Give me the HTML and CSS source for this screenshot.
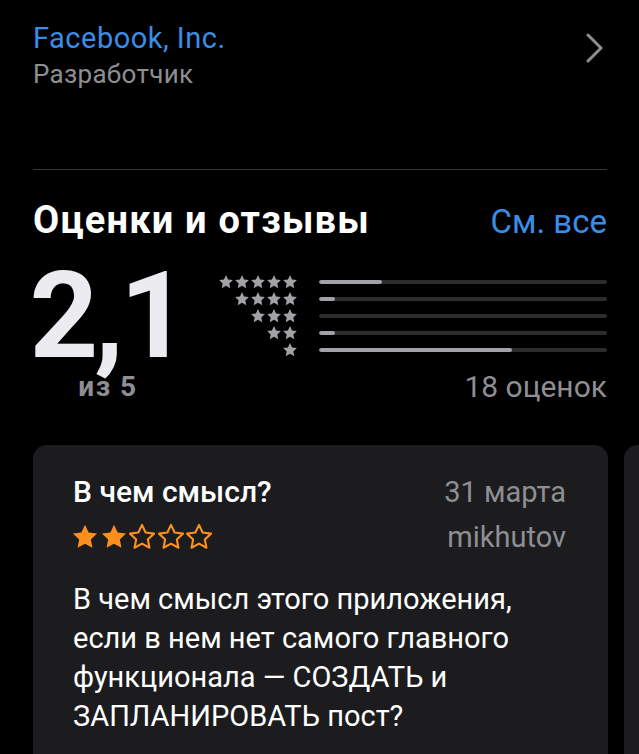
FILE: index.html
```html
<!DOCTYPE html>
<html lang="ru">
<head>
<meta charset="utf-8">
<title>Оценки и отзывы</title>
<link rel="stylesheet" href="styles.css">
</head>
<body>
<svg width="0" height="0" class="defs">
  <defs>
    <path id="star" d="M12 1.6l3.1 6.6 7.2.9-5.3 5 1.4 7.1L12 17.7l-6.4 3.5 1.4-7.1-5.3-5 7.2-.9z"/>
  </defs>
</svg>
<div class="page">
  <div class="dev-row">
    <div class="dev-text">
      <div class="dev-name">Facebook, Inc.</div>
      <div class="dev-label">Разработчик</div>
    </div>
    <svg class="chevron" viewBox="0 0 18 30"><path d="M2 2l13 13L2 28" fill="none" stroke="currentColor" stroke-width="3" stroke-linecap="round" stroke-linejoin="round"/></svg>
  </div>
  <div class="divider"></div>

  <div class="ratings-head">
    <h2 class="ratings-title">Оценки и отзывы</h2>
    <span class="see-all">См. все</span>
  </div>

  <div class="summary">
    <div class="score">
      <div class="score-value">2,1</div>
      <div class="score-of">из 5</div>
    </div>
    <div class="histogram">
      <div class="hist-row">
        <div class="hist-stars"><svg viewBox="0 0 24 24"><use href="#star"/></svg><svg viewBox="0 0 24 24"><use href="#star"/></svg><svg viewBox="0 0 24 24"><use href="#star"/></svg><svg viewBox="0 0 24 24"><use href="#star"/></svg><svg viewBox="0 0 24 24"><use href="#star"/></svg></div>
        <div class="bar"><div class="fill" style="width:22%"></div></div>
      </div>
      <div class="hist-row">
        <div class="hist-stars"><svg viewBox="0 0 24 24"><use href="#star"/></svg><svg viewBox="0 0 24 24"><use href="#star"/></svg><svg viewBox="0 0 24 24"><use href="#star"/></svg><svg viewBox="0 0 24 24"><use href="#star"/></svg></div>
        <div class="bar"><div class="fill" style="width:5.5%"></div></div>
      </div>
      <div class="hist-row">
        <div class="hist-stars"><svg viewBox="0 0 24 24"><use href="#star"/></svg><svg viewBox="0 0 24 24"><use href="#star"/></svg><svg viewBox="0 0 24 24"><use href="#star"/></svg></div>
        <div class="bar"><div class="fill" style="width:0%"></div></div>
      </div>
      <div class="hist-row">
        <div class="hist-stars"><svg viewBox="0 0 24 24"><use href="#star"/></svg><svg viewBox="0 0 24 24"><use href="#star"/></svg></div>
        <div class="bar"><div class="fill" style="width:5.5%"></div></div>
      </div>
      <div class="hist-row">
        <div class="hist-stars"><svg viewBox="0 0 24 24"><use href="#star"/></svg></div>
        <div class="bar"><div class="fill" style="width:67%"></div></div>
      </div>
      <div class="count">18 оценок</div>
    </div>
  </div>

  <div class="reviews">
    <div class="card">
      <div class="card-head">
        <div class="card-left">
          <div class="card-title">В чем смысл?</div>
          <div class="card-stars">
            <svg viewBox="0 0 24 24" class="on"><use href="#star"/></svg>
            <svg viewBox="0 0 24 24" class="on"><use href="#star"/></svg>
            <svg viewBox="0 0 24 24" class="off"><use href="#star"/></svg>
            <svg viewBox="0 0 24 24" class="off"><use href="#star"/></svg>
            <svg viewBox="0 0 24 24" class="off"><use href="#star"/></svg>
          </div>
        </div>
        <div class="card-right">
          <div class="card-date">31 марта</div>
          <div class="card-author">mikhutov</div>
        </div>
      </div>
      <p class="card-body">В чем смысл этого приложения, если в нем нет самого главного функционала — СОЗДАТЬ и ЗАПЛАНИРОВАТЬ пост?</p>
    </div>
    <div class="card"></div>
  </div>
</div>
</body>
</html>
```

FILE: styles.css
```css
html, body {
  margin: 0;
  background: #000;
  height: 100%;
  overflow: hidden;
}
body {
  font-family: Roboto, "Noto Sans", sans-serif;
  color: #fff;
}
.defs {
  position: absolute;
}
.page {
  padding: 21px 32px 0 33px;
}
.dev-row {
  display: flex;
  justify-content: space-between;
  align-items: flex-start;
}
.dev-name {
  font-size: 29px;
  line-height: 34px;
  letter-spacing: 0.5px;
  color: #3a8de6;
}
.dev-label {
  margin-top: 3px;
  font-size: 26px;
  line-height: 32px;
  letter-spacing: 0.3px;
  color: #8e8e93;
}
.chevron {
  width: 18px;
  height: 30px;
  margin-top: 12px;
  margin-right: 3px;
  color: #8e8e93;
}
.divider {
  height: 1px;
  background: #38383a;
  margin-top: 79px;
}
.ratings-head {
  display: flex;
  justify-content: space-between;
  align-items: baseline;
  margin-top: 28px;
}
.ratings-title {
  margin: 0;
  font-size: 38px;
  line-height: 44px;
  letter-spacing: 1.2px;
  font-weight: 700;
}
.see-all {
  font-size: 33px;
  color: #3a8de6;
}
.summary {
  display: flex;
  margin-top: 24px;
}
.score {
  display: flex;
  flex-direction: column;
  align-items: center;
  width: 150px;
}
.score-value {
  font-size: 120px;
  line-height: 100px;
  font-weight: 700;
  letter-spacing: -4px;
  color: #ebebf0;
  margin-left: -2px;
}
.score-of {
  margin-top: 8px;
  font-size: 28px;
  line-height: 26px;
  letter-spacing: 1.5px;
  font-weight: 700;
  color: #8e8e93;
}
.histogram {
  flex: 1;
  padding-top: 7px;
}
.hist-row {
  display: flex;
  align-items: center;
  height: 17px;
}
.hist-stars {
  width: 115px;
  display: flex;
  justify-content: flex-end;
}
.hist-stars svg {
  width: 16px;
  height: 16px;
  fill: #a1a1a6;
}
.bar {
  flex: 1;
  margin-left: 21px;
  height: 4px;
  border-radius: 2px;
  background: #2c2c2e;
  overflow: hidden;
}
.fill {
  height: 100%;
  background: #a1a1a6;
  border-radius: 2px;
}
.count {
  margin-top: 13px;
  text-align: right;
  font-size: 30px;
  line-height: 32px;
  color: #8e8e93;
}
.reviews {
  display: flex;
  gap: 16px;
  margin-top: 42px;
}
.card {
  flex: 0 0 575px;
  box-sizing: border-box;
  height: 400px;
  background: #1c1c1e;
  border-radius: 14px;
  padding: 29px 42px 0 40px;
}
.card-head {
  display: flex;
  justify-content: space-between;
}
.card-title {
  font-size: 30px;
  line-height: 36px;
  font-weight: 500;
}
.card-stars {
  display: flex;
  gap: 0.5px;
  margin-top: 13px;
  margin-left: -2px;
}
.card-stars svg {
  width: 28px;
  height: 28px;
}
.card-stars .on {
  fill: #fd8f1f;
}
.card-stars .off {
  fill: none;
  stroke: #fd8f1f;
  stroke-width: 1.8;
  stroke-linejoin: round;
}
.card-right {
  text-align: right;
  color: #8e8e93;
  font-size: 29px;
}
.card-date {
  line-height: 36px;
}
.card-author {
  line-height: 36px;
  margin-top: 9px;
}
.card-body {
  margin: 25px 0 0;
  font-size: 29px;
  line-height: 39px;
}
```
